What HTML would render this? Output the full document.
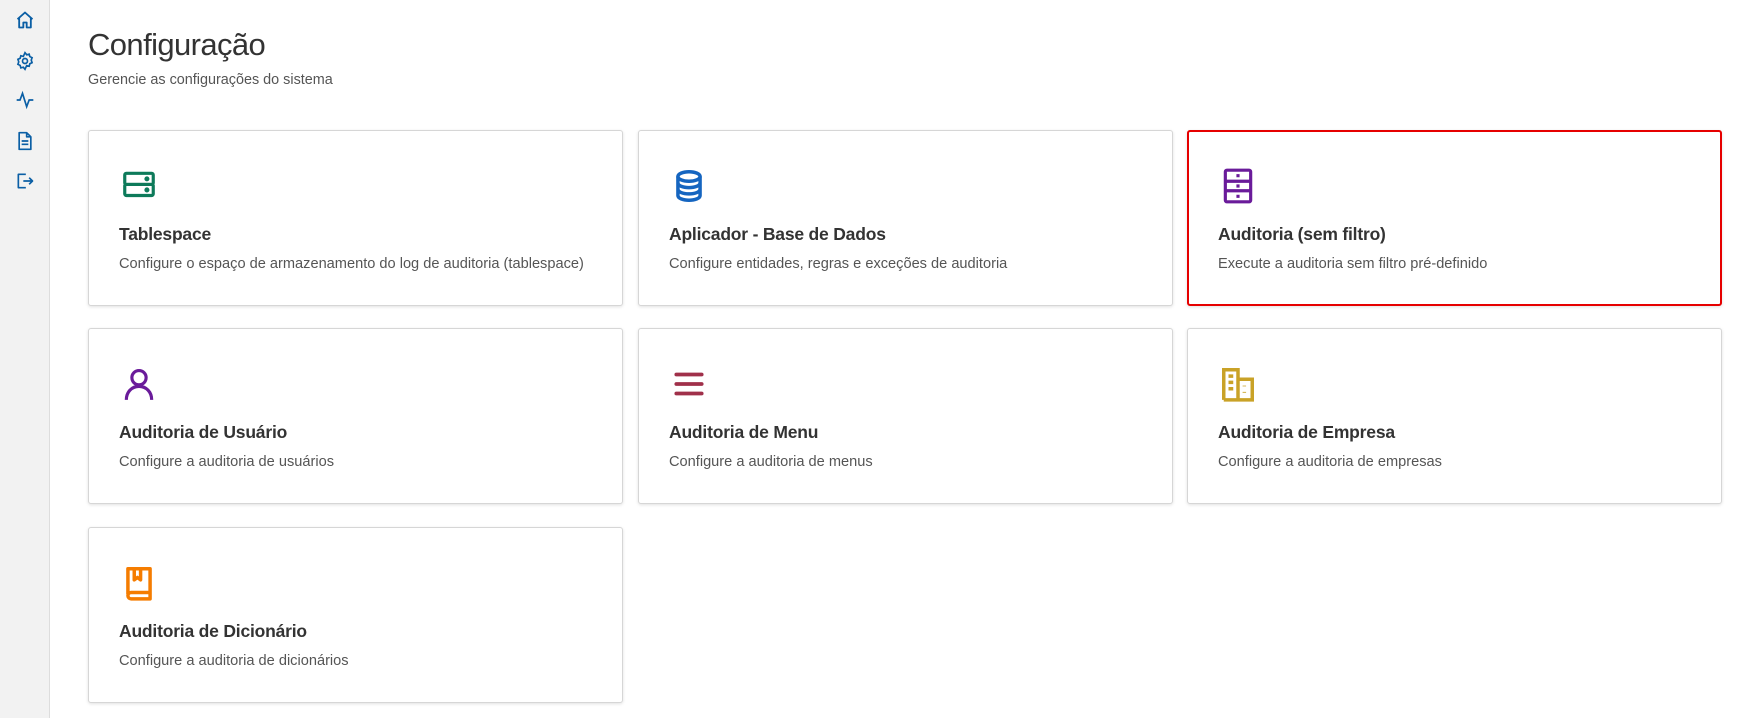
<!DOCTYPE html>
<html><head><meta charset="utf-8"><style>
*{box-sizing:border-box;margin:0;padding:0}
body{width:1739px;height:718px;background:#fff;font-family:"Liberation Sans",sans-serif;position:relative;overflow:hidden}
.side{position:absolute;left:0;top:0;width:50px;height:718px;background:#f2f2f2;border-right:1px solid #ddd}
.side svg{position:absolute;left:15px;width:20px;height:20px}
h1{position:absolute;left:88px;top:27px;font-size:31px;font-weight:400;color:#333;letter-spacing:-0.6px}
.sub{position:absolute;left:88px;top:72px;font-size:14.4px;color:#555}
.card{position:absolute;width:535px;height:176px;background:#fff;border:1px solid #d6d6d6;border-radius:3px;box-shadow:0 1px 3px rgba(0,0,0,.12)}
.card.sel{border:2px solid #e60000}
.card svg{position:absolute;left:31px;top:36px;width:38px;height:38px}
.card .t{position:absolute;left:30px;top:93px;font-size:17.5px;color:#333;font-weight:700;letter-spacing:-0.2px}
.card .d{position:absolute;left:30px;top:125px;font-size:14.6px;color:#555}
</style></head><body>
<div class="side">
<svg style="top:10px" viewBox="0 0 24 24" fill="none" stroke="#0b5fa5" stroke-width="2.2" stroke-linejoin="round"><path d="M3 11 12 3l9 8M5 9v12h5v-6h4v6h5V9"/></svg>
<svg style="top:51px" viewBox="0 0 24 24" fill="none" stroke="#0b5fa5" stroke-width="2"><circle cx="12" cy="12" r="3"/><path d="M12 2l2 2.5 3-.8.8 3L20.5 8l-1 3 1 3-2.7 1.3-.8 3-3-.8L12 22l-2-2.5-3 .8-.8-3L3.5 16l1-3-1-3 2.7-1.3.8-3 3 .8z"/></svg>
<svg style="top:90px" viewBox="0 0 24 24" fill="none" stroke="#0b5fa5" stroke-width="2"><path d="M2 12h4l3-8 5 16 3-8h5"/></svg>
<svg style="top:131px" viewBox="0 0 24 24" fill="none" stroke="#0b5fa5" stroke-width="2" stroke-linejoin="round"><path d="M5 2h9l5 5v15H5zM14 2v5h5M8 12h8M8 16h8"/></svg>
<svg style="top:171px" viewBox="0 0 24 24" fill="none" stroke="#0b5fa5" stroke-width="2" stroke-linejoin="round"><path d="M13 4H4v16h9M10 12h11M17 8l4 4-4 4"/></svg>
</div>
<h1>Configuração</h1>
<div class="sub">Gerencie as configurações do sistema</div>

<div class="card" style="left:88px;top:130px"><svg viewBox="0 0 24 24" fill="none" stroke="#0d7a5a" stroke-width="2"><rect x="3" y="4" width="18" height="7" rx="1"/><rect x="3" y="11" width="18" height="7" rx="1"/><circle cx="17" cy="7.5" r=".6" fill="#0d7a5a"/><circle cx="17" cy="14.5" r=".6" fill="#0d7a5a"/></svg><div class="t">Tablespace</div><div class="d">Configure o espaço de armazenamento do log de auditoria (tablespace)</div></div>
<div class="card" style="left:638px;top:130px"><svg viewBox="0 0 24 24" fill="none" stroke="#1565c0" stroke-width="2.2"><ellipse cx="12" cy="6" rx="7" ry="3"/><path d="M5 6v12c0 1.7 3.1 3 7 3s7-1.3 7-3V6M5 10c0 1.7 3.1 3 7 3s7-1.3 7-3M5 14c0 1.7 3.1 3 7 3s7-1.3 7-3"/></svg><div class="t">Aplicador - Base de Dados</div><div class="d">Configure entidades, regras e exceções de auditoria</div></div>
<div class="card sel" style="left:1187px;top:130px"><svg style="left:30px;top:35px" viewBox="0 0 24 24" fill="none" stroke="#6a1b9a" stroke-width="2"><rect x="4" y="2" width="16" height="20" rx="1"/><path d="M4 9h16M4 15h16M11 5.5h2M11 12h2M11 18.5h2"/></svg><div class="t" style="left:29px;top:92px">Auditoria (sem filtro)</div><div class="d" style="left:29px;top:124px">Execute a auditoria sem filtro pré-definido</div></div>

<div class="card" style="left:88px;top:328px"><svg viewBox="0 0 24 24" fill="none" stroke="#6a1b9a" stroke-width="2"><circle cx="12" cy="8" r="4.5"/><path d="M4 22c0-5 3.5-8.5 8-8.5s8 3.5 8 8.5"/></svg><div class="t">Auditoria de Usuário</div><div class="d">Configure a auditoria de usuários</div></div>
<div class="card" style="left:638px;top:328px"><svg viewBox="0 0 24 24" fill="none" stroke="#a0304a" stroke-width="2.4" stroke-linecap="round"><path d="M4 6h16M4 12h16M4 18h16"/></svg><div class="t">Auditoria de Menu</div><div class="d">Configure a auditoria de menus</div></div>
<div class="card" style="left:1187px;top:328px"><svg viewBox="0 0 24 24" fill="none" stroke="#c9a227" stroke-width="2.2"><path d="M3 22V3h9v19M12 9h9v13H3M6 7h3M6 11h3M6 15h3M16 13v.5M16 17v.5"/></svg><div class="t">Auditoria de Empresa</div><div class="d">Configure a auditoria de empresas</div></div>

<div class="card" style="left:88px;top:527px"><svg viewBox="0 0 24 24" fill="none" stroke="#f57c00" stroke-width="2.2" stroke-linejoin="round"><path d="M5 19V3h14v19H7a2 2 0 0 1 0-4h12M9 3v7l2-1.5 2 1.5V3"/></svg><div class="t">Auditoria de Dicionário</div><div class="d">Configure a auditoria de dicionários</div></div>
</body></html>
